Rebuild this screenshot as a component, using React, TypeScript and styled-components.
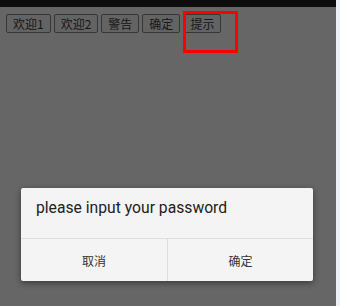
import { createGlobalStyle, styled } from 'styled-components';

const GlobalStyle = createGlobalStyle`
  html, body {
    margin: 0;
    padding: 0;
    background: #666666;
  }
  body {
    font-family: Roboto, "Noto Sans CJK SC", sans-serif;
  }
`;

const Screen = styled.div`
  display: flex;
  width: 340px;
  height: 306px;
  overflow: hidden;
`;

const Main = styled.div`
  position: relative;
  flex: 1;
  display: flex;
  flex-direction: column;
  background: #666666;
`;

const Strip = styled.div`
  width: 4px;
  background: #eef0f8;
`;

const StatusBar = styled.div`
  height: 7px;
  background: #0d0d0d;
`;

const Toolbar = styled.div`
  display: flex;
  align-items: flex-start;
  gap: 3px;
  padding: 7px 0 0 6px;
`;

const ToolButton = styled.button`
  box-sizing: border-box;
  height: 19px;
  padding: 0 6px;
  margin: 0;
  border: 1px solid #363636;
  border-radius: 2px;
  background: #636363;
  color: #161616;
  font-family: "Noto Sans CJK SC", sans-serif;
  font-size: 12px;
  line-height: 17px;
  white-space: nowrap;
`;

const Highlight = styled.div`
  position: absolute;
  left: 183px;
  top: 11px;
  width: 55px;
  height: 42px;
  box-sizing: border-box;
  border: 3px solid #ff0000;
`;

const Dialog = styled.div`
  position: absolute;
  left: 21px;
  top: 188px;
  width: 292px;
  background: #f4f4f4;
  border-radius: 2px;
  box-shadow: 0 2px 6px rgba(0, 0, 0, 0.45);
  display: flex;
  flex-direction: column;
`;

const Message = styled.div`
  height: 50px;
  box-sizing: border-box;
  padding: 11px 15px 0;
  font-family: Roboto, sans-serif;
  font-size: 15.7px;
  line-height: 18px;
  color: #222;
`;

const Actions = styled.div`
  display: grid;
  grid-template-columns: 1fr 1fr;
  height: 42px;
  border-top: 1px solid #dedede;
`;

const ActionButton = styled.button<{ $divider?: boolean }>`
  border: none;
  border-left: ${(p) => (p.$divider ? '1px solid #dedede' : 'none')};
  background: transparent;
  color: #333;
  font-family: "Noto Sans CJK SC", sans-serif;
  font-size: 12px;
  padding: 0;
`;

const App = () => {
  return (
    <>
      <GlobalStyle />
      <Screen>
        <Main>
          <StatusBar />
          <Toolbar>
            <ToolButton>欢迎1</ToolButton>
            <ToolButton>欢迎2</ToolButton>
            <ToolButton>警告</ToolButton>
            <ToolButton>确定</ToolButton>
            <ToolButton>提示</ToolButton>
          </Toolbar>
          <Highlight />
          <Dialog>
            <Message>please input your password</Message>
            <Actions>
              <ActionButton>取消</ActionButton>
              <ActionButton $divider>确定</ActionButton>
            </Actions>
          </Dialog>
        </Main>
        <Strip />
      </Screen>
    </>
  );
};

export default App;
